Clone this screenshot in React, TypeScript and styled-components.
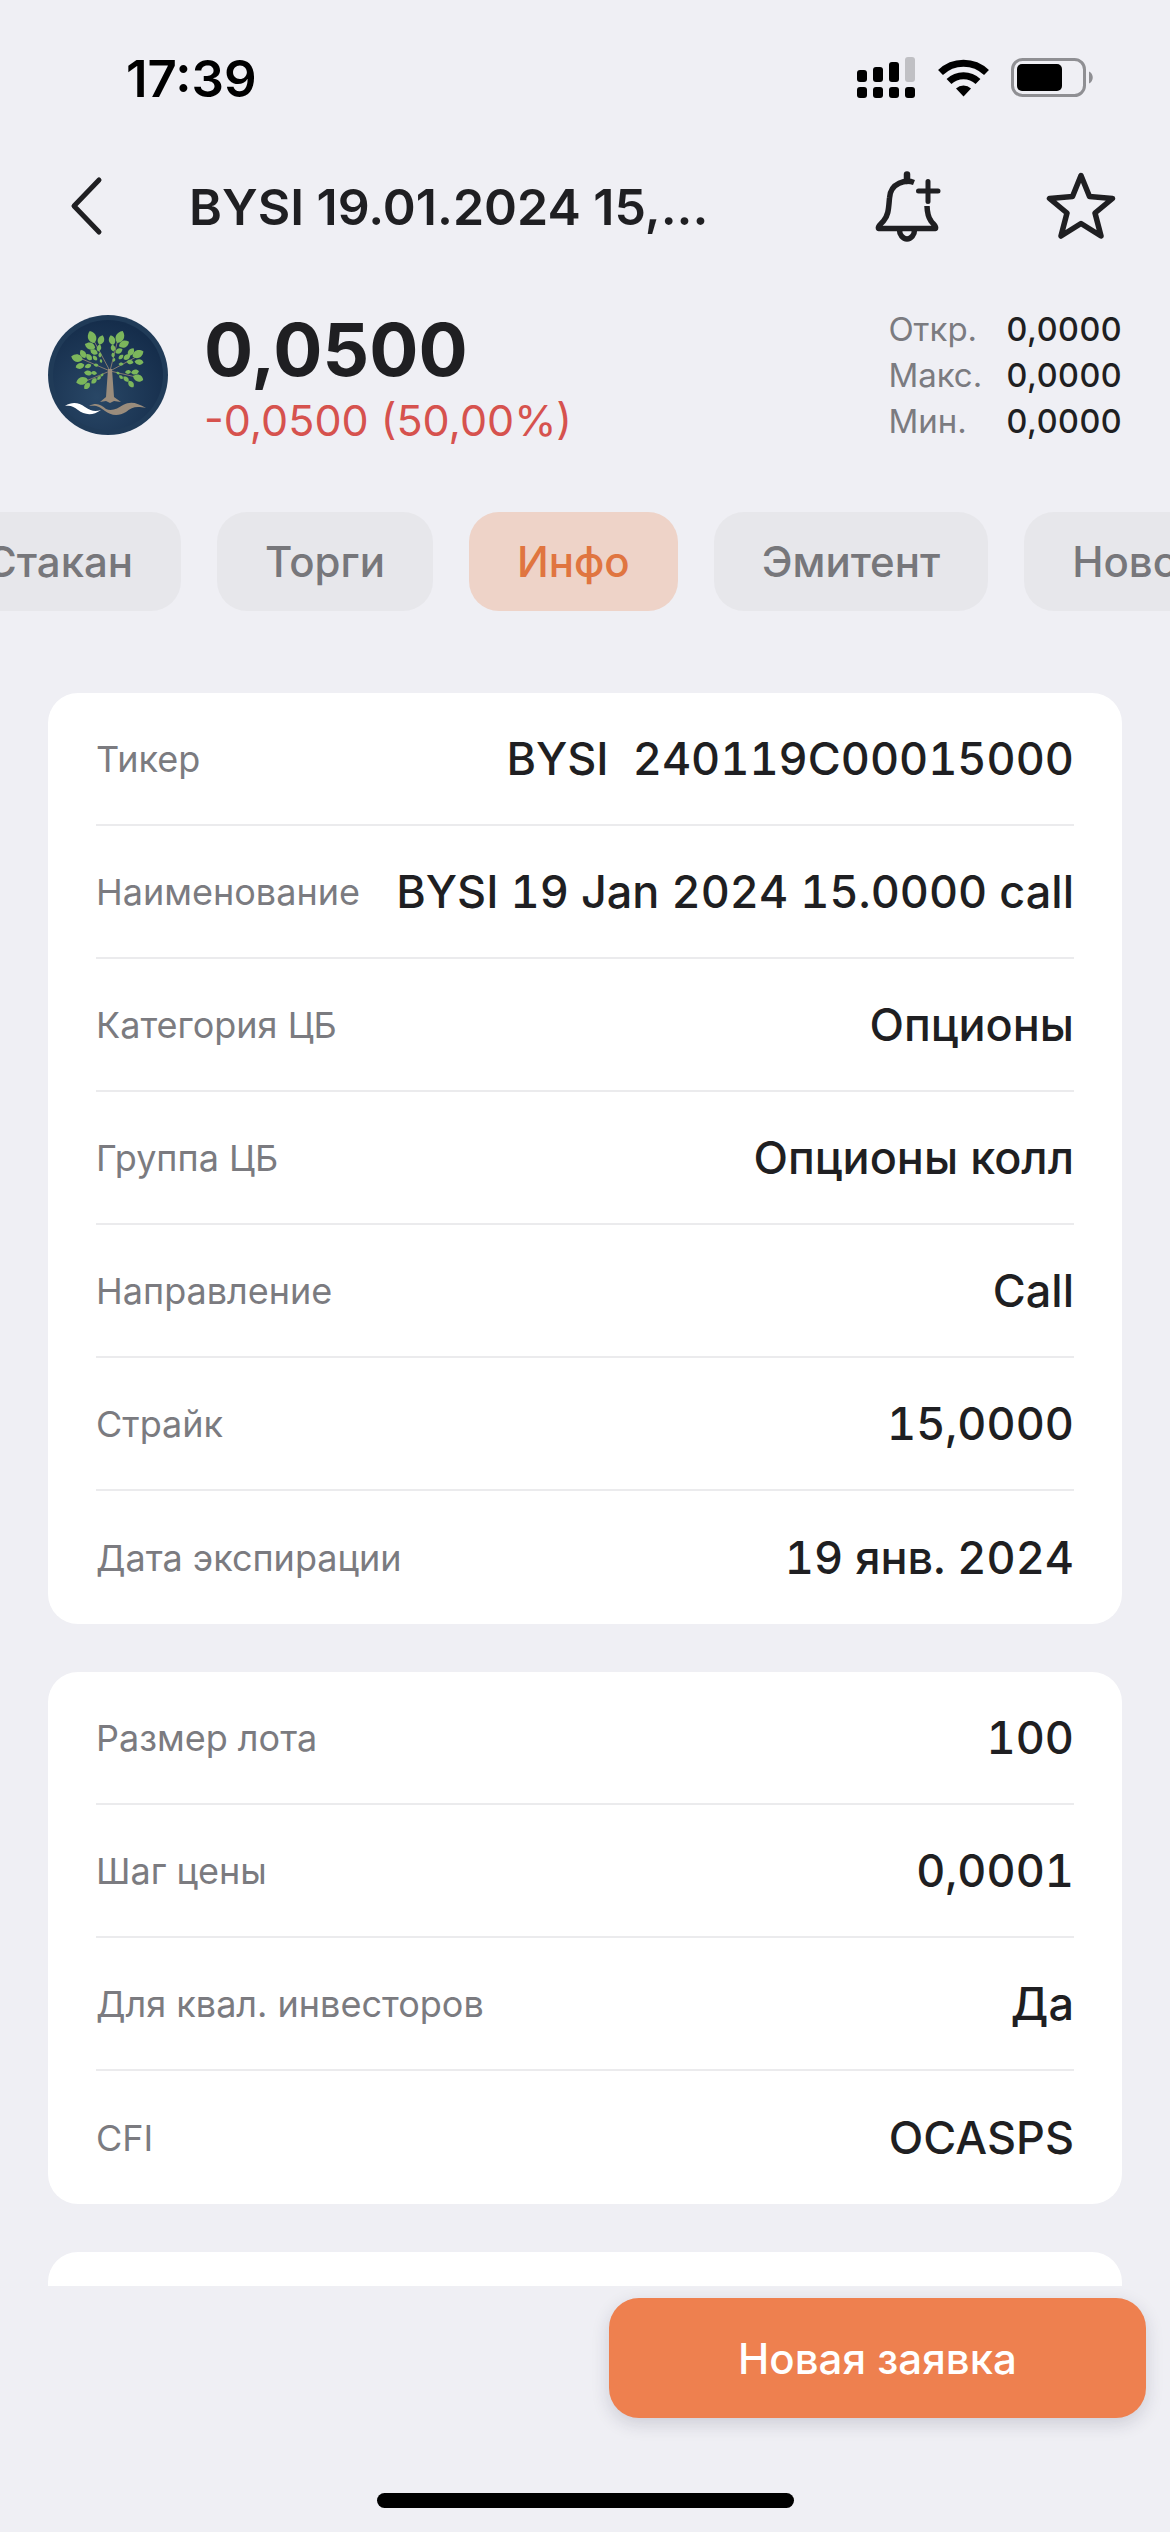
import React, { useLayoutEffect, useRef, useState } from 'react'
import styled, { createGlobalStyle } from 'styled-components'

const GlobalStyle = createGlobalStyle`
  * {
    box-sizing: border-box;
  }

  body {
    margin: 0;
    background: #efeff4;
    color: #1f1f22;
    font-family: Inter, 'Noto Sans', 'Liberation Sans', sans-serif;
    font-size: 42px;
  }

  button {
    border: none;
    background: none;
    padding: 0;
    color: inherit;
    font: inherit;
    cursor: pointer;
  }
`

const Screen = styled.div`
  display: flex;
  flex-direction: column;
  height: 100vh;
  overflow: hidden;
`

const StatusBar = styled.div`
  display: flex;
  align-items: center;
  justify-content: space-between;
  height: 156px;
  padding: 0 76px 0 126px;
  color: #000;
`

const Clock = styled.time`
  font-size: 51px;
  font-weight: 600;
`

const StatusIcons = styled.div`
  display: flex;
  align-items: center;
  gap: 22px;
`

const NavBar = styled.header`
  display: flex;
  align-items: center;
  height: 102px;
  padding: 0 54px 0 66px;
`

const IconButton = styled.button`
  display: flex;
  flex-shrink: 0;

  & + & {
    margin-left: 104px;
  }
`

const Title = styled.h1`
  flex: 1;
  min-width: 0;
  margin: 0 150px 0 81px;
  font-size: 50px;
  font-weight: 600;
  line-height: 62px;
  white-space: nowrap;
`

const Quote = styled.section`
  display: flex;
  align-items: center;
  height: 254px;
  padding: 54px 48px 74px;
`

const QuoteMain = styled.div`
  flex: 1;
  margin-left: 36px;
`

const Price = styled.div`
  font-size: 73px;
  font-weight: 700;
  line-height: 90px;
`

const Change = styled.div`
  color: #d6524e;
  font-size: 43px;
  line-height: 50px;
`

const Stats = styled.dl`
  display: grid;
  grid-template-columns: auto auto;
  column-gap: 24px;
  margin: 0;
  font-size: 33px;
  line-height: 46px;

  dt {
    color: #7b7b80;
  }

  dd {
    margin: 0;
    font-variant-numeric: tabular-nums;
    font-weight: 500;
    text-align: right;
  }
`

const Tabs = styled.nav`
  display: flex;
  gap: 36px;
  overflow-x: auto;
  scrollbar-width: none;
`

const Tab = styled.button<{ $active: boolean }>`
  flex-shrink: 0;
  height: 99px;
  padding: 0 48px;
  border-radius: 30px;
  background: ${props => props.$active ? '#eed3c8' : '#e7e7eb'};
  color: ${props => props.$active ? '#e07540' : '#77777b'};
  font-weight: 500;
`

const Content = styled.main`
  display: flex;
  flex: 1;
  flex-direction: column;
  gap: 48px;
  min-height: 0;
  margin-top: 82px;
  padding: 0 48px;
  overflow: hidden;
`

const Card = styled.dl`
  flex-shrink: 0;
  min-height: 133px;
  margin: 0;
  padding: 0 48px;
  border-radius: 30px;
  background: #fff;
`

const Row = styled.div`
  display: flex;
  align-items: center;
  justify-content: space-between;
  height: 133px;

  &:not(:last-child) {
    border-bottom: 2px solid #ebebed;
  }

  dt {
    color: #7b7b80;
    font-size: 36px;
  }

  dd {
    margin: 0;
    font-size: 45px;
    font-variant-numeric: tabular-nums;
    font-weight: 500;
    white-space: pre;
  }
`

const Footer = styled.footer`
  display: grid;
  grid-template-columns: 1fr 1fr;
  column-gap: 48px;
  row-gap: 75px;
  padding: 12px 24px 24px;
`

const OrderButton = styled.button`
  grid-column: 2;
  height: 120px;
  border-radius: 30px;
  background: #ee804f;
  box-shadow: 0 6px 18px rgba(30, 30, 60, 0.16);
  color: #fff;
  font-weight: 500;
`

const HomeIndicator = styled.div`
  grid-column: 1 / -1;
  justify-self: center;
  width: 417px;
  height: 15px;
  border-radius: 8px;
  background: #000;
`

const SignalIcon = () => (
  <svg width="59" height="42" viewBox="0 0 59 42">
    <rect x="0" y="13" width="10" height="12" rx="3" />
    <rect x="16" y="10" width="10" height="15" rx="3" />
    <rect x="32" y="5" width="10" height="20" rx="3" />
    <rect x="48" y="0" width="10" height="25" rx="3" fill="#c0c0c4" />
    {[0, 16, 32, 48].map(x => <rect key={x} x={x} y="30" width="10" height="11" rx="3" />)}
  </svg>
)

const WifiIcon = () => (
  <svg width="51" height="38" viewBox="0 0 51 38">
    <g fill="none" stroke="#000" strokeWidth="7">
      <path d="M2.500 13.500a33 33 0 0 1 46 0" />
      <path d="M11 22.500a21 21 0 0 1 29 0" />
    </g>
    <path d="M25.500 37.500 18 29.500a11 11 0 0 1 15 0z" />
  </svg>
)

const BatteryIcon = () => (
  <svg width="83" height="40" viewBox="0 0 83 40">
    <rect x="1.500" y="1.500" width="72" height="36" rx="10" fill="none" stroke="#8f8f93" strokeWidth="3" />
    <rect x="6" y="6" width="45" height="27" rx="5" />
    <path d="M78 13.500c5 2 5 10 0 12z" fill="#8f8f93" />
  </svg>
)

const BackIcon = () => (
  <svg width="42" height="72" viewBox="0 0 42 72" fill="none" stroke="#1f1f22" strokeWidth="5" strokeLinecap="round" strokeLinejoin="round">
    <path d="M33 9 8 35l25 26" />
  </svg>
)

const BellPlusIcon = () => (
  <svg width="70" height="72" viewBox="0 0 70 72" fill="none" stroke="#1f1f22" strokeWidth="5.500" strokeLinecap="round" strokeLinejoin="round">
    <path d="M35 3.500V10" strokeWidth="6.500" />
    <path d="M42 11.500C34 8.500 18.500 11.500 17.500 27C16.500 38 16.500 44 11.500 50C8.500 53.500 5.500 55 6.500 57.500H63.500C64.500 55 61.500 53.500 59 50C56 46 55.200 41 55 35" strokeLinecap="butt" />
    <path d="M56 10.500v20M46.500 20h19.500" strokeWidth="5" />
    <path d="M27.500 59a7.500 9 0 0 0 15 0" />
  </svg>
)

const StarIcon = () => (
  <svg width="70" height="72" viewBox="0 0 70 72" fill="none" stroke="#1f1f22" strokeWidth="5.500" strokeLinejoin="round">
    <path d="M35 4.500 43.500 25.500 66.500 27.500 49 42 55 65 35 52.500 15 65 21 42 3.500 27.500 26.500 25.500z" />
  </svg>
)

// [x, y, length, angle] of every leaf, measured from the leaf centre
const leaves = [
  [44, 22, 13, 70], [53, 25, 10, 110], [42, 31, 11, 20], [51, 33, 7, 105], [46, 37, 8, 25],
  [72, 22, 13, 115], [64, 25, 10, 75], [76, 29, 11, 155], [65, 33, 7, 80], [71, 36, 8, 150],
  [29, 43, 12, 15], [35, 39, 9, 60], [32, 51, 9, -15], [41, 42, 8, 50], [40, 51, 7, -20], [47, 43, 6, 50],
  [90, 39, 12, 155], [83, 37, 9, 125], [91, 47, 9, 5], [79, 42, 8, 145], [82, 47, 7, 10], [73, 42, 6, 140],
  [34, 66, 12, -15], [40, 58, 8, 10], [39, 71, 8, -50], [46, 58, 6, 10], [46, 66, 7, -45], [51, 63, 5, -50],
  [90, 63, 11, 20], [87, 57, 8, -10], [83, 69, 8, 55], [80, 57, 6, -5], [78, 64, 7, 45], [73, 62, 5, 45],
  [52, 40, 5, 90], [65, 40, 5, 90], [53, 46, 4, 80], [66, 45, 4, 110], [48, 50, 5, 10], [73, 49, 5, 0],
  [54, 60, 4, -50], [70, 58, 4, 30]
]

const CompanyLogo = () => (
  <svg width="120" height="120" viewBox="0 0 120 120" role="img" aria-label="BYSI">
    <defs>
      <radialGradient id="disc" cx="0.4" cy="0.7" r="0.7">
        <stop offset="0" stopColor="#294766" />
        <stop offset="1" stopColor="#152d4b" />
      </radialGradient>
    </defs>
    <circle cx="60" cy="60" r="60" fill="#203b58" />
    <circle cx="60" cy="60" r="55" fill="url(#disc)" />
    <g fill="none" stroke="#857b6f" strokeWidth="1">
      <path d="M62 56 46 26M62 56 34 44M62 56 38 66M62 56 70 24M62 56 90 41M62 56 88 62" />
    </g>
    <path d="M60 54h4l2 28 7 5-7-1-4 2-4-2-6 1 6-5z" fill="#9a8c7c" />
    {leaves.map(([x, y, size, angle]) => (
      <path
        key={`${x}-${y}`}
        d="M-5 0C-2-4.500 3-4 5 0C3 4-2 4.500-5 0z"
        transform={`translate(${x} ${y}) rotate(${angle}) scale(${size / 10})`}
        fill="#7cb65c"
      />
    ))}
    <path d="M17 91c8-5 14-3 20 1s10 5 16 3c-8 6-17 5-23 0-4-3-7-5-13-4z" fill="#fff" />
    <path d="M41 91c8-4 12-1 17 3 6 3 12-1 17-4 8-4 14-2 23 3-10-2-14-1-20 4-8 5-16 3-21-1-6-5-9-6-16-5z" fill="#9a8c7c" />
  </svg>
)

const TABS_SCROLL = 62

const tabs = ['Стакан', 'Торги', 'Инфо', 'Эмитент', 'Новости']

const stats = [
  { label: 'Откр.', value: '0,0000' },
  { label: 'Макс.', value: '0,0000' },
  { label: 'Мин.', value: '0,0000' }
]

const groups = [
  [
    { label: 'Тикер', value: 'BYSI  240119C00015000' },
    { label: 'Наименование', value: 'BYSI 19 Jan 2024 15.0000 call' },
    { label: 'Категория ЦБ', value: 'Опционы' },
    { label: 'Группа ЦБ', value: 'Опционы колл' },
    { label: 'Направление', value: 'Call' },
    { label: 'Страйк', value: '15,0000' },
    { label: 'Дата экспирации', value: '19 янв. 2024' }
  ],
  [
    { label: 'Размер лота', value: '100' },
    { label: 'Шаг цены', value: '0,0001' },
    { label: 'Для квал. инвесторов', value: 'Да' },
    { label: 'CFI', value: 'OCASPS' }
  ],
  []
]

const App: React.FC = () => {
  const [activeTab, setActiveTab] = useState('Инфо')
  const tabsRef = useRef<HTMLElement>(null)

  useLayoutEffect(() => {
    if (tabsRef.current) tabsRef.current.scrollLeft = TABS_SCROLL
  }, [])

  return (
    <Screen>
      <GlobalStyle />
      <StatusBar>
        <Clock>17:39</Clock>
        <StatusIcons>
          <SignalIcon />
          <WifiIcon />
          <BatteryIcon />
        </StatusIcons>
      </StatusBar>

      <NavBar>
        <IconButton aria-label="Назад"><BackIcon /></IconButton>
        <Title>BYSI 19.01.2024 15,...</Title>
        <IconButton aria-label="Добавить уведомление"><BellPlusIcon /></IconButton>
        <IconButton aria-label="В избранное"><StarIcon /></IconButton>
      </NavBar>

      <Quote>
        <CompanyLogo />
        <QuoteMain>
          <Price>0,0500</Price>
          <Change>-0,0500 (50,00%)</Change>
        </QuoteMain>
        <Stats>
          {stats.map(({ label, value }) => (
            <React.Fragment key={label}>
              <dt>{label}</dt>
              <dd>{value}</dd>
            </React.Fragment>
          ))}
        </Stats>
      </Quote>

      <Tabs ref={tabsRef}>
        {tabs.map(tab => (
          <Tab key={tab} $active={tab === activeTab} onClick={() => setActiveTab(tab)}>
            {tab}
          </Tab>
        ))}
      </Tabs>

      <Content>
        {groups.map((rows, index) => (
          <Card key={index}>
            {rows.map(({ label, value }) => (
              <Row key={label}>
                <dt>{label}</dt>
                <dd>{value}</dd>
              </Row>
            ))}
          </Card>
        ))}
      </Content>

      <Footer>
        <OrderButton>Новая заявка</OrderButton>
        <HomeIndicator />
      </Footer>
    </Screen>
  )
}

export default App
